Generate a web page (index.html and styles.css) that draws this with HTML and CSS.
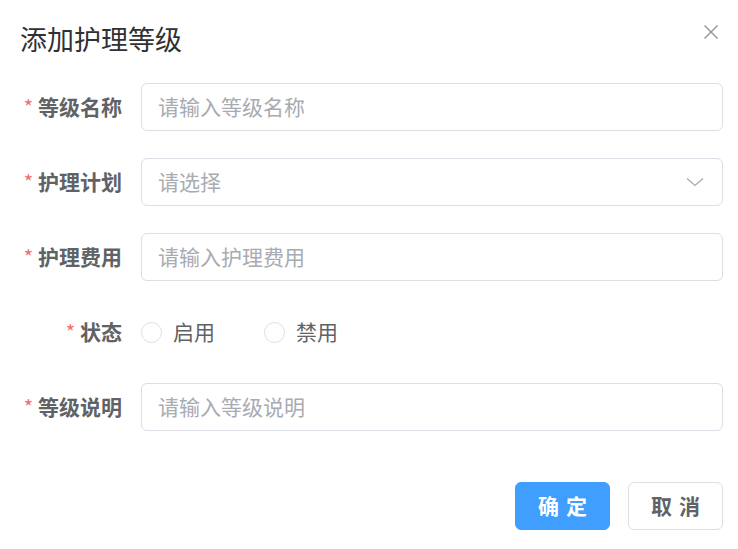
FILE: index.html
```html
<!DOCTYPE html>
<html lang="zh">
<head>
<meta charset="utf-8">
<link rel="stylesheet" href="styles.css">
</head>
<body>
<div class="dialog">
  <div class="header">
    <span class="title">添加护理等级</span>
    <button class="close" aria-label="close">
      <svg width="16" height="16" viewBox="0 0 16 16"><path d="M1.5 1.5 L14.5 14.5 M14.5 1.5 L1.5 14.5" stroke="#909399" stroke-width="1.4" fill="none"/></svg>
    </button>
  </div>
  <form class="form">
    <div class="row">
      <label class="label"><span class="star">*</span>等级名称</label>
      <div class="control"><div class="input"><span class="ph">请输入等级名称</span></div></div>
    </div>
    <div class="row">
      <label class="label"><span class="star">*</span>护理计划</label>
      <div class="control"><div class="input select"><span class="ph">请选择</span>
        <svg class="arrow" width="18" height="10" viewBox="0 0 18 10"><path d="M1 1.5 L9 8.5 L17 1.5" stroke="#a8abb2" stroke-width="1.3" fill="none"/></svg>
      </div></div>
    </div>
    <div class="row">
      <label class="label"><span class="star">*</span>护理费用</label>
      <div class="control"><div class="input"><span class="ph">请输入护理费用</span></div></div>
    </div>
    <div class="row">
      <label class="label"><span class="star">*</span>状态</label>
      <div class="control radios">
        <span class="radio"><span class="circle"></span>启用</span>
        <span class="radio"><span class="circle"></span>禁用</span>
      </div>
    </div>
    <div class="row">
      <label class="label"><span class="star">*</span>等级说明</label>
      <div class="control"><div class="input"><span class="ph">请输入等级说明</span></div></div>
    </div>
  </form>
  <div class="footer">
    <button class="btn primary">确 定</button>
    <button class="btn">取 消</button>
  </div>
</div>
</body>
</html>
```
FILE: styles.css
```css
* { box-sizing: border-box; }
html, body { margin: 0; padding: 0; background: #fff; }
body {
  font-family: "Noto Sans CJK SC", "Noto Sans", sans-serif;
  color: #606266;
  width: 738px;
  height: 549px;
  overflow: hidden;
}
.dialog { padding: 0 15px 0 20px; }
.header {
  height: 83px;
  display: flex;
  align-items: flex-start;
  justify-content: space-between;
  padding-top: 20px;
}
.title {
  font-size: 27px;
  line-height: 38px;
  color: #303133;
}
.close {
  border: none;
  background: none;
  padding: 0;
  margin-top: 4px;
  margin-right: 4px;
  width: 16px;
  height: 16px;
  display: flex;
}
.form { display: flex; flex-direction: column; gap: 27px; }
.row { display: flex; align-items: center; height: 48px; }
.label {
  width: 121px;
  padding-right: 19px;
  padding-bottom: 2px;
  text-align: right;
  font-size: 21px;
  font-weight: 700;
  color: #606266;
  white-space: nowrap;
}
.star { color: #f56c6c; margin-right: 5px; font-weight: 400; font-size: 20px; }
.control { flex: 1; }
.input {
  height: 48px;
  border: 1px solid #dcdfe6;
  border-radius: 6px;
  padding: 0 16px 2px;
  display: flex;
  align-items: center;
  font-size: 21px;
}
.ph { color: #a8abb2; }
.select { justify-content: space-between; padding-right: 18px; }
.arrow { display: block; margin-top: 2px; }
.radios { display: flex; align-items: center; gap: 49px; font-size: 21px; color: #606266; padding-bottom: 2px; }
.radio { display: flex; align-items: center; gap: 11px; }
.circle {
  width: 21px;
  height: 21px;
  border: 1px solid #dcdfe6;
  border-radius: 50%;
  background: #fff;
  margin-top: 2px;
}
.footer {
  display: flex;
  justify-content: flex-end;
  gap: 18px;
  margin-top: 51px;
}
.btn {
  width: 95px;
  height: 48px;
  border: 1px solid #dcdfe6;
  border-radius: 6px;
  background: #fff;
  color: #606266;
  font-family: "Noto Sans CJK SC", sans-serif;
  font-size: 21px;
  font-weight: 700;
  letter-spacing: 1px;
  padding: 0 0 2px 1px;
}
.btn.primary { background: #409eff; border-color: #409eff; color: #fff; }
```
